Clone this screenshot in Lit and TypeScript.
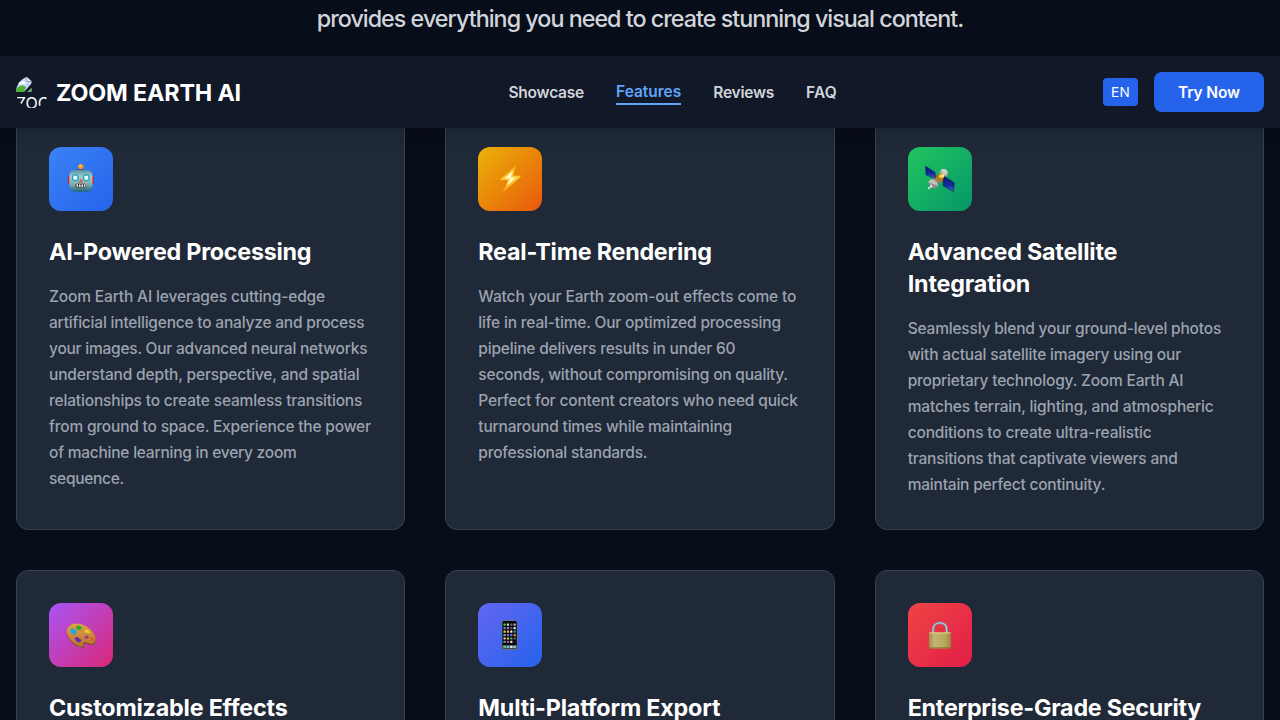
import { LitElement, html, css, svg } from "lit";
import { customElement, property } from "lit/decorators.js";

/** A line of text tracked so that it fills the given measure. */
@customElement("fit-line")
class FitLine extends LitElement {
  @property({ type: Number }) measure = 0;
  @property() text = "";

  static styles = css`
    :host { display: block; white-space: nowrap; }
    .run { display: inline-block; }
  `;

  firstUpdated() {
    const run = this.renderRoot.querySelector(".run") as HTMLElement;
    const width = run.getBoundingClientRect().width;
    if (this.measure && width) {
      run.style.letterSpacing = `${(this.measure - width) / this.text.length}px`;
    }
  }

  render() {
    return html`<span class="run">${this.text}</span>`;
  }
}

type Line = [string, number];

interface Feature {
  tone: string;
  icon: unknown;
  title: Line[];
  body: Line[];
}

const robot = svg`
  <defs><linearGradient id="rh" x1="0" y1="0" x2="0" y2="1">
    <stop offset="0" stop-color="#4f93a4"/><stop offset=".3" stop-color="#a9c9cc"/><stop offset=".65" stop-color="#7fb0b4"/><stop offset="1" stop-color="#1f6674"/>
  </linearGradient></defs>
  <rect x="18.8" y="29" width="3" height="8" rx="1.2" fill="#c3283a"/><rect x="42" y="29" width="3" height="8" rx="1.2" fill="#c3283a"/>
  <path d="M28.6 24.2Q28.6 21.6 31.8 21.6Q35 21.6 35 24.2Z" fill="#5f3d78"/>
  <circle cx="31.8" cy="19.6" r="2.6" fill="#f39a20"/><circle cx="31.3" cy="18.7" r="1" fill="#ffd15c"/>
  <path d="M25 23H38.6Q43.3 23 43.5 29V38Q43.3 44.8 37 44.8H26.8Q20.5 44.8 20.3 38V29Q20.3 23 25 23Z" fill="url(#rh)"/>
  <circle cx="26.3" cy="30.8" r="3.5" fill="#18a5b9"/><circle cx="37.3" cy="30.8" r="3.5" fill="#18a5b9"/>
  <circle cx="26.3" cy="30.8" r="2.2" fill="#effcff"/><circle cx="37.3" cy="30.8" r="2.2" fill="#effcff"/>
  <path d="M31.8 31.7L34.2 35.6H29.4Z" fill="#e8534c"/>
  <rect x="26.4" y="36.8" width="10.8" height="3.6" rx="1.3" fill="#44383c"/>
  <path d="M27.5 37.3h1.5v2.4h-1.5zM30 37.6h1.5v2.5H30zM32.5 37.6H34v2.5h-1.5zM35 37.3h1.4v2.4H35z" fill="#e7f0ed"/>`;

const bolt = svg`
  <defs><linearGradient id="bo" x1="0" y1="0" x2="0" y2="1">
    <stop offset="0" stop-color="#ffa81c"/><stop offset=".5" stop-color="#ffcf34"/><stop offset="1" stop-color="#ff9a12"/>
  </linearGradient></defs>
  <path d="M37.8 18.6L22.4 32.2Q22 33.2 23.5 33.1H30L24.6 45.7L42.6 29.8Q43 28.8 41.5 28.8H35.4Z" fill="url(#bo)"/>
  <path d="M35.1 23.2L26.6 31.5H32.3L28.5 39.3L37.8 30.5H32.8Z" fill="#fffbd0"/>`;

const satellite = svg`
  <defs><linearGradient id="sp" x1="0" y1="0" x2="0" y2="1">
    <stop offset="0" stop-color="#0c176f"/><stop offset=".6" stop-color="#122895"/><stop offset="1" stop-color="#4474bb"/>
  </linearGradient></defs>
  <circle cx="35.8" cy="26" r="4.2" fill="#a8aaa5"/><path d="M33 23Q38 20 39.6 26L36 28Z" fill="#d0cfcb"/>
  <path d="M26 28.5L38 34.6" stroke="#80502a" stroke-width="2"/>
  <path d="M17.6 19.2L27 25.2L27.6 31.9L18 27.8Z" fill="url(#sp)" stroke="#0b1361" stroke-width=".5"/>
  <path d="M35.5 28.8L46.3 35.8L45.6 44.8L35 38.8Z" fill="url(#sp)" stroke="#0b1361" stroke-width=".5"/>
  <path d="M20.8 21.3l.5 7.8M24 23.3l.5 7.2M39 31.2l-.4 9.5M42.6 33.6l-.4 9" stroke="#344db7" stroke-width=".4"/>
  <path d="M31.5 25.7L36.7 29L33 36.2L26.3 32.6Z" fill="#b87a22"/>
  <path d="M32 27L36 27.8L33.6 31.5L30.6 30Z" fill="#f5c950"/><circle cx="34.8" cy="28.8" r="1.5" fill="#fff07b"/>
  <ellipse cx="25.6" cy="36.4" rx="5.2" ry="4.8" transform="rotate(30 25.6 36.4)" fill="#8f908e"/>
  <path d="M20.5 35.5Q21 32 25.5 32.8Q29.8 35 29.5 38.5Q25 37 20.5 35.5Z" fill="#c0c0bc"/>
  <path d="M23.6 37L20.8 41.2L24.3 40Z" fill="#eee"/><circle cx="20.9" cy="41.2" r="1.1" fill="#d8dad6"/>`;

const palette = svg`
  <defs><linearGradient id="pa" x1="0" y1="0" x2="0" y2="1">
    <stop offset="0" stop-color="#dca04b"/><stop offset="1" stop-color="#bb772b"/>
  </linearGradient></defs>
  <path d="M18 29.4C17 23 24.5 19.3 32 21.5C40.5 24 47.4 31.4 46.9 37.5C46.4 42.6 42.5 42.7 39.5 41.2C36.3 39.6 34.4 39.8 35.2 42.4C36 45.5 32 45.3 28.5 43.3C22.8 40.6 18.6 35 18 29.4Z" fill="#81501f"/>
  <path d="M17.8 28.5C17.3 22.5 24.5 18.9 32 21C40.4 23.4 47 31 46.6 36.5C46 41 42.3 41.4 39.4 40C36.3 38.5 33.4 38.6 34.2 41.4C34.8 44.3 31.2 43.8 28.4 42.2C22.6 39.4 18.4 33.7 17.8 28.5Z" fill="url(#pa)"/>
  <ellipse cx="37.6" cy="34.2" rx="2" ry="1.8" fill="#9a3d85"/>
  <path d="M27.2 24l2.2-1.7 1.7.6 1.8 1.5-1.3 2.4-2.4.2-1.9-1.2z" fill="#25ad25"/>
  <path d="M21.2 27.2l2.2-2.1 2 1.2 2.6 1.3-1.2 3.1-2.7 1-1.8-1.8z" fill="#20a8df"/>
  <path d="M25.4 35.2l2.7-1.5 2.2 1.7 2.5 1.6-2 2.4-3-.5z" fill="#682ca7"/>
  <path d="M35.4 27.3l2.4-.8 2.4 1.7 1.3 1.7-3.2.1-2.2-1.1z" fill="#f2cf27"/>
  <path d="M40.8 34.5l2-.9 2.3 2.3.3 2.5-2.4-.6z" fill="#e55742"/>`;

const appColors = [
  "#54cf62", "#d9dce0", "#6b6873", "#bdaacb", "#4b9ee4", "#dd66ca", "#575d61", "#e7e7e7",
  "#e9ca46", "#e8b93d", "#eeeeee", "#3c95b0", "#3fc8ac", "#cb4dd2", "#4376de", "#ed903b",
  "#ded9d0", "#f3cf40", "#3fc56d", "#766c5f", "#2da8de", "#dd4c56", "#d5d9df", "#16171b",
];

const phone = svg`
  <rect x="23.6" y="17.2" width="16" height="29.6" rx="2" fill="#6d7179"/>
  <rect x="24.4" y="18" width="14.4" height="28" rx="1.4" fill="#090b11"/>
  ${appColors.map((c, i) => svg`<rect x=${25.5 + (i % 4) * 3.35} y=${20.6 + Math.floor(i / 4) * 3.45} width="2.2" height="2.2" rx=".5" fill=${c}/>`)}
  <rect x="24.4" y="42.2" width="14.4" height="3.5" fill="#566069"/>
  ${["#68cf5e", "#5dc8d8", "#e8eaee", "#91d7bf"].map((c, i) => svg`<rect x=${25.5 + i * 3.35} y="42.7" width="2.3" height="2.3" rx=".5" fill=${c}/>`)}`;

const lock = svg`
  <defs><linearGradient id="lo" x1="0" y1="0" x2="1" y2="0">
    <stop offset="0" stop-color="#a48d46"/><stop offset=".25" stop-color="#c7b973"/><stop offset=".75" stop-color="#b7a75b"/><stop offset="1" stop-color="#968344"/>
  </linearGradient></defs>
  <path d="M25.2 30V26.2C25.2 17.8 38.8 17.8 38.8 26.2V30" fill="none" stroke="#78879b" stroke-width="2.7"/>
  <path d="M25 30V26.2C25 17.6 38.6 17.8 38.6 26V30" fill="none" stroke="#bdc8d4" stroke-width="1.3"/>
  <rect x="21" y="29.4" width="22" height="16" rx="1" fill="url(#lo)"/>
  <rect x="21.3" y="29.4" width="21.4" height="1" fill="#e0d18c"/>
  <path d="M21.2 33h21.6M21.2 36h21.6M21.2 39h21.6M21.2 42h21.6" stroke="#8c7b3f" stroke-width=".3" opacity=".35"/>
  <rect x="21.3" y="44.4" width="21.4" height="1" fill="#806b30"/>`;

const features: Feature[] = [
  {
    tone: "blue", icon: robot,
    title: [["AI-Powered Processing", 262.3]],
    body: [
      ["Zoom Earth AI leverages cutting-edge", 276],
      ["artificial intelligence to analyze and process", 315.3],
      ["your images. Our advanced neural networks", 318.3],
      ["understand depth, perspective, and spatial", 310.5],
      ["relationships to create seamless transitions", 313.2],
      ["from ground to space. Experience the power", 321.8],
      ["of machine learning in every zoom", 247.6],
      ["sequence.", 75],
    ],
  },
  {
    tone: "amber", icon: bolt,
    title: [["Real-Time Rendering", 233.5]],
    body: [
      ["Watch your Earth zoom-out effects come to", 318],
      ["life in real-time. Our optimized processing", 302.6],
      ["pipeline delivers results in under 60", 257],
      ["seconds, without compromising on quality.", 309.5],
      ["Perfect for content creators who need quick", 319.5],
      ["turnaround times while maintaining", 253.6],
      ["professional standards.", 169],
    ],
  },
  {
    tone: "green", icon: satellite,
    title: [["Advanced Satellite", 209.5], ["Integration", 122.5]],
    body: [
      ["Seamlessly blend your ground-level photos", 313.4],
      ["with actual satellite imagery using our", 273.3],
      ["proprietary technology. Zoom Earth AI", 275.7],
      ["matches terrain, lighting, and atmospheric", 306],
      ["conditions to create ultra-realistic", 244],
      ["transitions that captivate viewers and", 270],
      ["maintain perfect continuity.", 197.5],
    ],
  },
  { tone: "purple", icon: palette, title: [["Customizable Effects", 238.5]], body: [] },
  { tone: "indigo", icon: phone, title: [["Multi-Platform Export", 242]], body: [] },
  { tone: "red", icon: lock, title: [["Enterprise-Grade Security", 293.5]], body: [] },
];

const fit = ([text, measure]: Line) =>
  html`<fit-line .text=${text} .measure=${measure}></fit-line>`;

@customElement("app-root")
class AppRoot extends LitElement {
  static styles = css`
    :host {
      display: block; position: relative; height: 720px; overflow: hidden;
      background: #080d1a; color: #fff;
      font-family: Inter, "Liberation Sans", sans-serif;
    }
    .intro {
      display: flex; justify-content: center; height: 114px; box-sizing: border-box;
      padding-top: 3px; font-size: 23.3px; line-height: 32px; font-weight: 470; color: #d1d5db;
    }
    .grid {
      display: grid; grid-template-columns: repeat(3, 1fr); gap: 40px;
      padding: 0 16px; grid-auto-rows: 416px;
    }
    .card {
      box-sizing: border-box; padding: 32px; border: 1px solid #374151;
      border-radius: 12px; background: #1f2937;
    }
    .icon { width: 64px; height: 64px; border-radius: 12px; margin-bottom: 25px; }
    .icon svg { display: block; }
    .blue { background: linear-gradient(to bottom right, #3b82f6, #2563eb); }
    .amber { background: linear-gradient(to bottom right, #eab308, #ea580c); }
    .green { background: linear-gradient(to bottom right, #22c55e, #059669); }
    .purple { background: linear-gradient(to bottom right, #a855f7, #db2777); }
    .indigo { background: linear-gradient(to bottom right, #6366f1, #2563eb); }
    .red { background: linear-gradient(to bottom right, #ef4444, #e11d48); }
    h3 { margin: 0 0 16px; font-size: 23.3px; line-height: 32px; font-weight: 740; }
    p { margin: 0; font-size: 15.5px; line-height: 26px; font-weight: 460; color: #9ca3af; }
    header {
      position: absolute; inset: 56px 0 auto 0; height: 72px; box-sizing: border-box;
      display: flex; align-items: center; justify-content: space-between;
      padding: 0 16px; background: #111827;
      box-shadow: 0 10px 15px -3px rgba(0, 0, 0, .1), 0 4px 6px -4px rgba(0, 0, 0, .1);
    }
    .brand { display: flex; align-items: center; gap: 8px; padding-right: 1.5px; font-size: 23.3px; font-weight: 740; line-height: 32px; }
    .brand fit-line { padding-top: 2px; }
    .avatar { width: 32px; height: 32px; border-radius: 50%; overflow: hidden; font-size: 16px; font-weight: 400; line-height: 22px; }
    .avatar svg, .avatar span { display: block; }
    nav { display: flex; align-items: center; gap: 32px; font-size: 15.5px; line-height: 24px; font-weight: 560; color: #d1d5db; }
    nav > fit-line { padding-top: 2px; }
    .active { color: #60a5fa; border-bottom: 2px solid #60a5fa; height: 24px; }
    .active fit-line { padding-top: 1px; line-height: 23px; }
    .actions { display: flex; align-items: center; gap: 16px; }
    .lang { padding: 4px 8px; border-radius: 4px; background: #2563eb; font-size: 13.6px; line-height: 20px; font-weight: 440; }
    .cta { padding: 9px 24px 7px; border-radius: 8px; background: #2563eb; font-size: 15.5px; line-height: 24px; font-weight: 640; }
  `;

  render() {
    return html`
      <div class="intro">${fit(["provides everything you need to create stunning visual content.", 646.5])}</div>
      <main class="grid">
        ${features.map((f) => html`
          <section class="card">
            <div class="icon ${f.tone}"><svg width="64" height="64" viewBox="0 0 64 64">${f.icon}</svg></div>
            <h3>${f.title.map(fit)}</h3>
            <p>${f.body.map(fit)}</p>
          </section>`)}
      </main>
      <header>
        <div class="brand">
          <div class="avatar">
            <svg width="16" height="16" viewBox="0 0 16 16">
              <path d="M0 1H11L15.5 5V16H0Z" fill="#c3d4f5"/>
              <path d="M11 1V5.5H15.5Z" fill="#f4f6fa" stroke="#8a8f96" stroke-width=".8"/>
              <path d="M2 8Q3 5 5.5 6Q7 3.5 9 6Q11 7 9 8Z" fill="#fff"/>
              <path d="M0 16V13Q5 7 10 11L8 16Z" fill="#4fae33"/>
              <path d="M16 7L8 16H11.5L16 11.5Z" fill="#111827"/>
              <path d="M15.5 12.5V16H12.5Z" fill="#4fae33"/>
            </svg>
            <span>ZOOM</span>
          </div>
          ${fit(["ZOOM EARTH AI", 185])}
        </div>
        <nav>
          ${fit(["Showcase", 75.6])}
          <div class="active">${fit(["Features", 65.2])}</div>
          ${fit(["Reviews", 60.8])}
          ${fit(["FAQ", 31])}
        </nav>
        <div class="actions">
          <div class="lang">${fit(["EN", 19])}</div>
          <div class="cta">${fit(["Try Now", 62])}</div>
        </div>
      </header>`;
  }
}
